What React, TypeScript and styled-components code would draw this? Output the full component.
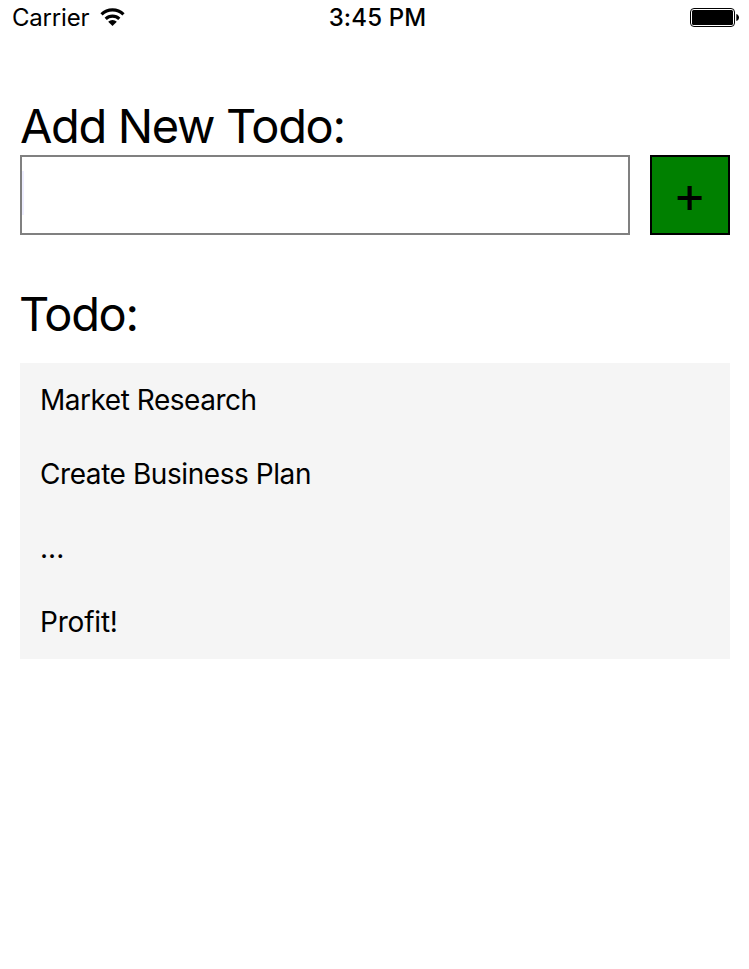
import React from "react";
import styled, { createGlobalStyle } from "styled-components";

const GlobalStyle = createGlobalStyle`
  * { box-sizing: border-box; }
  body { margin: 0; background: #fff; color: #000; font-family: Inter, "Liberation Sans", sans-serif; }
`;
const Screen = styled.main`
  width: 749px; height: 969px; overflow: hidden; display: flex; flex-direction: column; background: #fff;
`;
const StatusBar = styled.header`
  height: 40px; padding: 0 10px 5px 12px; display: grid; grid-template-columns: 1fr auto 1fr; align-items: center;
`;
const Carrier = styled.div`
  display: flex; align-items: center; font-size: 24px; line-height: 35px; letter-spacing: -0.2px;
`;
const CarrierName = styled.span`
  width: 88px; white-space: nowrap;
`;
const Clock = styled.time`
  padding-left: 4px; font-size: 24px; line-height: 35px; font-weight: 550; letter-spacing: 0.15px; white-space: nowrap;
`;
const BatteryIcon = styled.svg`
  justify-self: end; display: block;
`;
const Content = styled.div`
  padding: 60px 19px 0 20px; display: flex; flex-direction: column;
`;
const Heading = styled.h1`
  margin: 0; padding-bottom: 4px; font-size: 47px; line-height: 51px; font-weight: 400;
  letter-spacing: -1.35px; white-space: nowrap;
`;
const ListHeading = styled(Heading)`
  margin-left: -1px;
`;
const Form = styled.form`
  display: flex; gap: 20px; margin-bottom: 53px;
`;
const Field = styled.input`
  flex: 1; min-width: 0; height: 80px; border: 2px solid #808080; border-radius: 0; padding: 0 4px; outline: 0;
  background: linear-gradient(#eef, #eef) 0 14px / 2px 44px no-repeat #fff; background-origin: padding-box; font: inherit; font-size: 28px;
`;
const AddButton = styled.button`
  width: 80px; height: 80px; padding: 0 1px 0 0; border: 2px solid #000; border-radius: 0; background: #008000;
  display: grid; place-items: center; color: #000; font: inherit; font-size: 51px; line-height: 58px;
`;
const List = styled.ul`
  margin: 20px 0 0; padding: 0; list-style: none; background: #f5f5f5;
`;
const Item = styled.li<{ $tracking: number }>`
  height: 74px; padding: 0 20px; font-size: 28px; line-height: 74px; letter-spacing: ${p => p.$tracking}px;
`;

const todos = [
  { text: "Market Research", tracking: -0.47 },
  { text: "Create Business Plan", tracking: -0.43 },
  { text: "...", tracking: 0 },
  { text: "Profit!", tracking: -0.2 },
];

export default function App() {
  return (
    <Screen>
      <GlobalStyle />
      <StatusBar>
        <Carrier>
          <CarrierName>Carrier</CarrierName>
          <svg width="25" height="19" viewBox="0 0 25 19" aria-label="Wi-Fi">
            <g fill="none" stroke="#000" strokeWidth="3.1">
              <path d="M1.5 6.4a15.6 15.6 0 0 1 22 0" />
              <path d="M5.7 10.900a9.6 9.6 0 0 1 13.6 0" />
            </g>
            <path d="M12.5 18l4.300-4.2a6 6 0 0 0-8.600 0z" />
          </svg>
        </Carrier>
        <Clock>3:45 PM</Clock>
        <BatteryIcon width="49" height="19" viewBox="0 0 49 19" aria-label="Battery">
          <rect x="0.5" y="0.5" width="44" height="18" rx="3.5" fill="#fff" stroke="#000" />
          <rect x="2" y="2" width="41" height="15" rx="1.5" />
          <path d="M46.3 6c3.6 1 3.6 6 0 7z" />
        </BatteryIcon>
      </StatusBar>
      <Content>
        <Heading>Add New Todo:</Heading>
        <Form onSubmit={e => e.preventDefault()}>
          <Field aria-label="New todo" />
          <AddButton aria-label="Add">+</AddButton>
        </Form>
        <ListHeading as="h2">Todo:</ListHeading>
        <List>{todos.map(t => <Item key={t.text} $tracking={t.tracking}>{t.text}</Item>)}</List>
      </Content>
    </Screen>
  );
}
